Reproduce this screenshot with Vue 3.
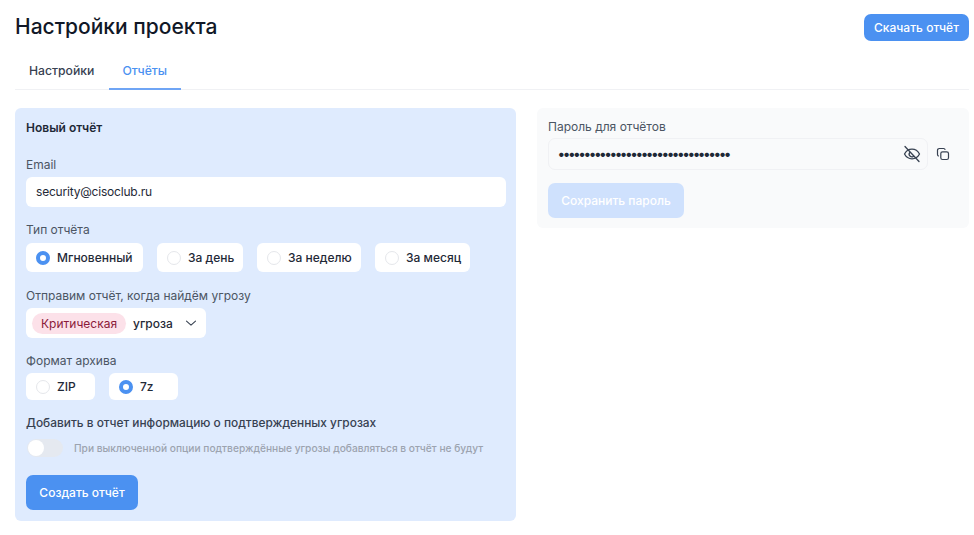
<template>
  <div class="page">
    <header class="head">
      <h1>Настройки проекта</h1>
      <button class="btn top">Скачать отчёт</button>
    </header>
    <nav class="tabs">
      <span class="tab">Настройки</span>
      <span class="tab active">Отчёты</span>
    </nav>
    <main class="cols">
      <section class="card left">
        <h2>Новый отчёт</h2>
        <label class="lbl first">Email</label>
        <div class="input">security@cisoclub.ru</div>
        <label class="lbl">Тип отчёта</label>
        <div class="radios">
          <div v-for="r in types" :key="r.t" class="radio" :style="{ width: r.w + 'px' }">
            <i class="dot" :class="{ on: r.on }"></i>{{ r.t }}
          </div>
        </div>
        <label class="lbl send">Отправим отчёт, когда найдём угрозу</label>
        <div class="select">
          <span class="tag">Критическая</span>
          <span class="sel-text">угроза</span>
          <svg class="chev" width="12" height="12" viewBox="0 0 12 12" fill="none" stroke="#374151" stroke-width="1.1" stroke-linecap="round" stroke-linejoin="round"><path d="M1.500 4.200L6 8.200l4.500-4"/></svg>
        </div>
        <label class="lbl fmt">Формат архива</label>
        <div class="radios small">
          <div class="radio fmt-radio"><i class="dot"></i>ZIP</div>
          <div class="radio fmt-radio"><i class="dot on"></i>7z</div>
        </div>
        <label class="lbl add">Добавить в отчет информацию о подтвержденных угрозах</label>
        <div class="toggle-row">
          <span class="toggle"><i></i></span>
          <span class="hint">При выключенной опции подтверждённые угрозы добавляться в отчёт не будут</span>
        </div>
        <button class="btn create">Создать отчёт</button>
      </section>
      <section class="card right">
        <label class="lbl pw">Пароль для отчётов</label>
        <div class="pw-row">
          <div class="pw-input">
            <span class="dots">{{ '•'.repeat(33) }}</span>
            <svg width="18" height="18" viewBox="0 0 18 18" fill="none" stroke="#374151" stroke-width="1.3" stroke-linecap="round" stroke-linejoin="round">
              <path d="M1.500 9C3.200 5.800 5.800 4.200 9 4.200s5.800 1.600 7.500 4.800c-1.700 3.200-4.300 4.800-7.500 4.800S3.200 12.200 1.500 9z"/>
              <path d="M6.800 7.400a2.700 2.700 0 0 0 3.800 3.800"/>
              <path d="M2 1.500l14 15"/>
            </svg>
          </div>
          <svg class="copy" width="14" height="14" viewBox="0 0 14 14" fill="none" stroke="#374151" stroke-width="1.200" stroke-linejoin="round">
            <rect x="4.800" y="4.800" width="7.700" height="7.700" rx="1.800"/>
            <path d="M9.200 2.800A1.700 1.700 0 0 0 7.600 1.500H3.300A1.800 1.800 0 0 0 1.500 3.300v4.300a1.700 1.700 0 0 0 1.300 1.600"/>
          </svg>
        </div>
        <button class="btn save">Сохранить пароль</button>
      </section>
    </main>
  </div>
</template>

<script setup>
const types = [
  { t: 'Мгновенный', w: 117, on: true },
  { t: 'За день', w: 86 },
  { t: 'За неделю', w: 104 },
  { t: 'За месяц', w: 95 }
]
</script>

<style>
html, body { margin: 0; background: #fff; }
</style>

<style scoped>
.page {
  width: 974px;
  height: 535px;
  box-sizing: border-box;
  padding: 14px 5px 0 15px;
  font-family: Inter, "Noto Sans", sans-serif;
  color: #111827;
  overflow: hidden;
}
.head { display: flex; justify-content: space-between; align-items: flex-start; height: 27px; }
h1 { margin: -1px 0 0; font-size: 21px; line-height: 28px; font-weight: 500; }
.btn {
  border: 0;
  background: #4b91f1;
  color: #fff;
  font: 500 12px/1 Inter, sans-serif;
  border-radius: 7px;
  padding: 0;
}
.top { width: 105px; height: 27px; }
.tabs {
  display: flex;
  margin-top: 13px;
  height: 35px;
  border-bottom: 1px solid #f0f1f4;
}
.tab {
  box-sizing: border-box;
  height: 36px;
  padding: 8px 14px 0;
  font-size: 12.200px;
  line-height: 18px;
  font-weight: 500;
  color: #374151;
}
.tab.active {
  color: #4b91f1;
  border-bottom: 2px solid #6fa5f5;
  width: 72px;
  margin-left: 1px;
  padding-left: 13px;
  padding-right: 0;
}
.cols { display: flex; gap: 21px; margin-top: 18px; align-items: flex-start; }
.card { border-radius: 6px; box-sizing: border-box; }
.left {
  width: 501px;
  height: 413px;
  background: #dfebfe;
  padding: 12px 10px 0 11px;
}
h2 { margin: 0; font-size: 12px; line-height: 16px; font-weight: 600; color: #1f2937; }
.lbl { display: block; font-size: 12px; line-height: 16px; color: #4b5563; margin: 15px 0 5px; }
.lbl.first { margin-top: 21px; margin-bottom: 4px; }
.input {
  height: 30px;
  box-sizing: border-box;
  background: #fff;
  border-radius: 6px;
  padding: 0 10px;
  font-size: 12px;
  letter-spacing: -0.2px;
  line-height: 30px;
  color: #1f2937;
}
.radios { display: flex; gap: 14px; }
.radio {
  box-sizing: border-box;
  height: 29px;
  background: #fff;
  border-radius: 6px;
  padding-left: 10px;
  display: flex;
  align-items: center;
  gap: 7px;
  font-size: 12px;
  font-weight: 500;
  color: #1f2937;
}
.radios.small .radio { height: 27px; }
.fmt-radio { width: 69px; }
.dot {
  width: 14px;
  height: 14px;
  box-sizing: border-box;
  border-radius: 50%;
  border: 1px solid #e5e7eb;
  background: #fff;
  flex: none;
}
.dot.on { border: 4px solid #4b91f1; }
.lbl.send { margin: 16px 0 4px; }
.select {
  width: 180px;
  height: 30px;
  box-sizing: border-box;
  background: #fff;
  border-radius: 6px;
  display: flex;
  align-items: center;
  padding-left: 6px;
  font-size: 12px;
}
.tag {
  background: #fce1e9;
  color: #8b1a3a;
  border-radius: 11px;
  height: 21px;
  line-height: 21px;
  padding: 0 9px;
  width: 94px;
  box-sizing: border-box;
  white-space: nowrap;
}
.sel-text { margin-left: 7px; color: #1f2937; font-weight: 500; }
.chev { margin-left: 12px; }
.lbl.fmt { margin: 15px 0 4px; }
.lbl.add { margin: 15px 0 0; font-size: 11.900px; color: #374151; font-weight: 500; }
.toggle-row { display: flex; align-items: center; margin-top: 8px; height: 18px; }
.toggle {
  width: 36px;
  height: 18px;
  border-radius: 9px;
  background: #e5e9f0;
  margin-left: 1px;
  position: relative;
  flex: none;
}
.toggle i {
  position: absolute;
  left: 1px;
  top: 1px;
  width: 16px;
  height: 16px;
  border-radius: 50%;
  background: #fff;
}
.hint { font-size: 10.200px; color: #9ca3af; margin-left: 11px; font-weight: 500; white-space: nowrap; }
.create { display: block; width: 112px; height: 35px; margin-top: 18px; }
.right {
  width: 432px;
  height: 120px;
  background: #f9fafb;
  padding: 11px 11px 0;
}
.lbl.pw { margin: 0 0 3px; }
.pw-row { display: flex; align-items: center; }
.pw-input {
  width: 380px;
  height: 32px;
  box-sizing: border-box;
  border: 1px solid #f0f1f4;
  border-radius: 7px;
  display: flex;
  align-items: center;
  justify-content: space-between;
  padding: 0 6px 0 9px;
}
.dots { font-size: 14px; font-weight: 700; color: #1f2937; letter-spacing: -1.440px; line-height: 1; }
.copy { margin-left: 8px; }
.save {
  display: block;
  width: 136px;
  height: 35px;
  margin-top: 13px;
  background: #cfe1fd;
}
</style>
